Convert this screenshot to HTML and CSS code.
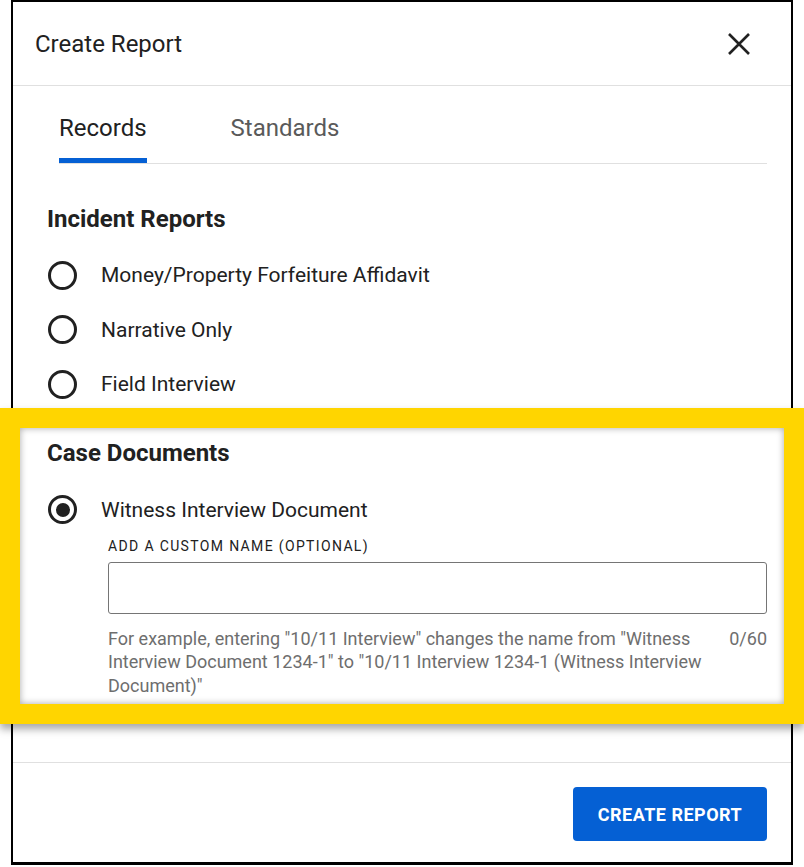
FILE: index.html
```html
<!DOCTYPE html>
<html lang="en">
<head>
  <meta charset="UTF-8">
  <title>Create Report</title>
  <link rel="stylesheet" href="styles.css">
</head>
<body>

  <div class="modal">
    <div class="modal-header">
      <h1>Create Report</h1>
      <button class="close-btn" aria-label="Close">
        <svg width="24" height="24" viewBox="0 0 24 24"><path d="M2 2 L22 22 M22 2 L2 22" stroke="#212121" stroke-width="2.6" fill="none"/></svg>
      </button>
    </div>

    <div class="modal-body">
      <div class="tabs">
        <div class="tab active">Records</div>
        <div class="tab">Standards</div>
      </div>

      <div class="group">
        <h2>Incident Reports</h2>
        <label class="option"><span class="radio"></span>Money/Property Forfeiture Affidavit</label>
        <label class="option"><span class="radio"></span>Narrative Only</label>
        <label class="option"><span class="radio"></span>Field Interview</label>
      </div>

      <div class="group highlight">
        <h2>Case Documents</h2>
        <label class="option"><span class="radio checked"></span>Witness Interview Document</label>
        <div class="custom-name">
          <div class="field-label">ADD A CUSTOM NAME (OPTIONAL)</div>
          <input type="text" class="field-input">
          <div class="field-help">
            <span>For example, entering "10/11 Interview" changes the name from "Witness Interview Document 1234-1" to "10/11 Interview 1234-1 (Witness Interview Document)"</span>
            <span class="counter">0/60</span>
          </div>
        </div>
      </div>
    </div>

    <div class="modal-footer">
      <button class="primary-btn">CREATE REPORT</button>
    </div>
  </div>

</body>
</html>
```

FILE: styles.css
```css
body {
  margin: 0;
  font-family: Roboto, 'Liberation Sans', sans-serif;
  color: #212121;
  background: #fff;
}

.modal {
  margin-left: 11px;
  width: 778px;
  border: 2px solid #000;
  border-bottom-width: 3px;
  background: #fff;
}

.modal-header {
  height: 83px;
  display: flex;
  align-items: center;
  justify-content: space-between;
  padding: 0 40px 0 22px;
  border-bottom: 1px solid #e0e0e0;
}

.modal-header h1 {
  margin: 0;
  font-size: 24px;
  font-weight: 400;
}

.close-btn {
  background: none;
  border: none;
  padding: 0;
  width: 24px;
  height: 24px;
  cursor: pointer;
}

.modal-body {
  padding: 16px 24px 38px 34px;
}

.tabs {
  display: flex;
  gap: 84px;
  margin-left: 12px;
  border-bottom: 1px solid #e0e0e0;
}

.tab {
  font-size: 24px;
  line-height: 28px;
  padding: 12px 0 16px;
  border-bottom: 5px solid transparent;
  color: #5a5a5a;
}

.tab.active {
  color: #212121;
  border-bottom-color: #0560d4;
}

.group h2 {
  margin: 0;
  font-size: 24px;
  line-height: 28px;
  font-weight: 700;
}

.group {
  padding-top: 41px;
}

.group h2 + .option {
  margin-top: 15px;
}

.option {
  display: flex;
  align-items: center;
  height: 54.5px;
  font-size: 21px;
  gap: 24px;
}

.radio {
  width: 23px;
  height: 23px;
  border: 3px solid #212121;
  border-radius: 50%;
  margin-left: 1px;
  position: relative;
  flex-shrink: 0;
}

.radio.checked::after {
  content: "";
  position: absolute;
  top: 4.5px;
  left: 4.5px;
  width: 14px;
  height: 14px;
  border-radius: 50%;
  background: #212121;
}

.highlight {
  margin: -4px -37px 0 -47px;
  padding: 11px 17px 7px 27px;
  border: 20px solid #ffd500;
  box-shadow: 0 5px 8px rgba(0,0,0,0.35), inset 0 0 7px rgba(0,0,0,0.35);
  position: relative;
}

.highlight h2 + .option {
  margin-top: 16px;
  height: 54px;
}

.custom-name {
  padding-left: 61px;
}

.field-label {
  font-size: 14px;
  line-height: 18px;
  font-weight: 400;
  letter-spacing: 1.35px;
}

.field-input {
  display: block;
  box-sizing: border-box;
  width: 100%;
  height: 52px;
  margin-top: 7px;
  border: 1px solid #757575;
  border-radius: 3px;
  font: inherit;
}

.field-help {
  display: flex;
  justify-content: space-between;
  gap: 18px;
  margin-top: 13px;
  font-size: 18px;
  line-height: 23.5px;
  color: #6e6e6e;
}

.counter {
  flex-shrink: 0;
}

.modal-footer {
  display: flex;
  justify-content: flex-end;
  padding: 24px 24px 21px;
  border-top: 1px solid #e0e0e0;
}

.primary-btn {
  width: 194px;
  height: 54px;
  background: #0560d4;
  color: #fff;
  border: none;
  border-radius: 4px;
  font-family: Roboto, 'Liberation Sans', sans-serif;
  font-size: 18px;
  font-weight: 700;
  letter-spacing: 0.5px;
  cursor: pointer;
}
```
